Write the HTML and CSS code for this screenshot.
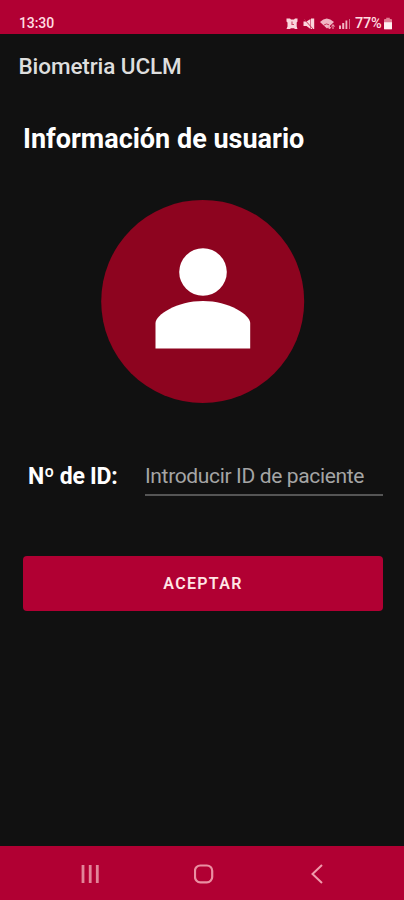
FILE: index.html
```html
<!DOCTYPE html>
<html lang="es">
<head>
<meta charset="utf-8">
<title>Biometria UCLM</title>
<link rel="stylesheet" href="styles.css">
</head>
<body>
<div class="screen">
  <div class="status-bar">
    <span class="clock">13:30</span>
    <svg class="status-icons" width="66" height="14" viewBox="0 0 66 14" aria-hidden="true">
      <g fill="#fbd5dc">
        <path d="M.5 1.500H4l1 1h3l1-1h2.500v3l-.8 1v4l.8 2.500H9l-1-.8H5l-1 .8H.5l1-2.500v-4l-1-1z"/>
        <path d="M17.500 4.500h3l4-2.500v10l-4-3h-3zM25 1.500h3.200v10.500H25z"/>
        <path d="M34 5q6.500-7 14 0l-7 6.500z" opacity=".85"/>
        <path d="M53 8.500h2v3.500h-2zM56.200 6h2v6h-2zM59.500 3.500h1.800v8.500h-1.800z" opacity=".85"/>
        <path d="M63 2h1v10h-1z" opacity=".5"/>
      </g>
      <path d="M6 4.500V7.500h2" fill="none" stroke="#c94966" stroke-width="1.100"/>
      <path d="M18 2l9 10M38 8q2.500-2 5-.2" fill="none" stroke="#c22a50" stroke-width=".9"/>
      <path d="M43.500 7.500v4m-1.500-1.500l1.500 2 1.500-2M47 12V8m-1.500 1.500L47 7.500l1.500 2" fill="none" stroke="#efa9b7" stroke-width="1"/>
    </svg>
    <span class="battery-text">77%</span>
    <svg class="battery" width="8" height="13" viewBox="0 0 9 13" aria-hidden="true">
      <path d="M2.500 0h4v1.500H8q1 0 1 1V12q0 1-1 1H1q-1 0-1-1V2.500q0-1 1-1h1.500z" fill="#e27d93"/>
      <path d="M0 5h9v7q0 1-1 1H1q-1 0-1-1z" fill="#fff0f0"/>
    </svg>
  </div>
  <header class="app-bar">Biometria UCLM</header>
  <main class="content">
    <h1 class="title">Información de usuario</h1>
    <svg class="avatar" width="204" height="204" viewBox="0 0 204 204" aria-hidden="true">
      <circle cx="101.700" cy="102.400" r="101.500" fill="#8d041f"/>
      <circle cx="102" cy="73" r="23.800" fill="#fff"/>
      <path d="M54.500 149.500V124C54.500 116 76 102 102 102S149.200 116 149.200 124V149.500Z" fill="#fff"/>
    </svg>
    <div class="field">
      <label class="label" for="patient">Nº de ID:</label>
      <input class="input" id="patient" type="text" placeholder="Introducir ID de paciente">
    </div>
    <button class="accept" type="button">ACEPTAR</button>
  </main>
  <nav class="nav-bar">
    <svg width="20" height="20" viewBox="0 0 20 20" aria-hidden="true"><path d="M2 1v18M9.200 1v18M16.300 1v18" stroke="#e28599" stroke-width="2.800" fill="none"/></svg>
    <svg width="20" height="20" viewBox="0 0 20 20" aria-hidden="true"><rect x="1" y="1.500" width="17.200" height="16.800" rx="5.300" stroke="#ea8fa2" stroke-width="2.200" fill="none"/></svg>
    <svg width="20" height="20" viewBox="0 0 20 20" aria-hidden="true"><path d="M15 1L5.500 10l9.500 9" stroke="#f09bac" stroke-width="2" fill="none"/></svg>
  </nav>
</div>
</body>
</html>
```

FILE: styles.css
```css
* {
  box-sizing: border-box;
}

body {
  margin: 0;
  background: #111;
  font-family: Roboto, sans-serif;
}

.screen {
  display: flex;
  flex-direction: column;
  width: 404px;
  height: 900px;
  background: #111;
}

.status-bar {
  display: flex;
  align-items: center;
  height: 34px;
  padding: 13px 12px 0 19px;
  background: #b10033;
  color: #ffdce1;
  font-size: 14px;
  font-weight: 500;
  line-height: 21px;
}

.clock {
  flex: 1;
  letter-spacing: -0.1px;
}

.status-icons {
  margin-right: 3px;
}

.battery-text {
  width: 28px;
  font-size: 14.5px;
  letter-spacing: -0.2px;
  white-space: nowrap;
}

.battery {
  margin-left: 1px;
}

.app-bar {
  height: 64px;
  padding: 1px 0 0 18.5px;
  color: #dedede;
  font-size: 22.5px;
  font-weight: 500;
  letter-spacing: -0.1px;
  line-height: 63px;
}

.content {
  display: flex;
  flex: 1;
  flex-direction: column;
  padding: 0 21px 0 23px;
}

.title {
  margin: 21px 0 0;
  color: #fff;
  font-size: 27px;
  font-weight: 700;
  line-height: 40px;
  white-space: nowrap;
}

.avatar {
  align-self: center;
  margin: 40px 0 0 -1px;
}

.field {
  display: flex;
  align-items: flex-start;
  height: 40px;
  margin-top: 53px;
  padding-left: 5px;
}

.label {
  width: 117px;
  color: #fff;
  font-size: 23px;
  font-weight: 700;
  letter-spacing: -0.25px;
  line-height: 42px;
  white-space: nowrap;
}

.input {
  flex: 1;
  min-width: 0;
  height: 40px;
  padding: 2px 0 0;
  border: 0;
  border-bottom: 2px solid #555;
  outline: 0;
  background: transparent;
  color: #fff;
  font-family: inherit;
  font-size: 21px;
  letter-spacing: -0.35px;
}

.input::placeholder {
  color: #a5a5a5;
  opacity: 1;
}

.accept {
  height: 55px;
  margin-top: 59.5px;
  padding: 0;
  border: 0;
  border-radius: 4px;
  background: #b10033;
  color: #ffe6e6;
  font-family: inherit;
  font-size: 16px;
  font-weight: 600;
  letter-spacing: 1.3px;
}

.nav-bar {
  display: flex;
  align-items: center;
  justify-content: space-between;
  height: 54px;
  padding: 2px 77px 0 81px;
  background: #b10033;
}
```
